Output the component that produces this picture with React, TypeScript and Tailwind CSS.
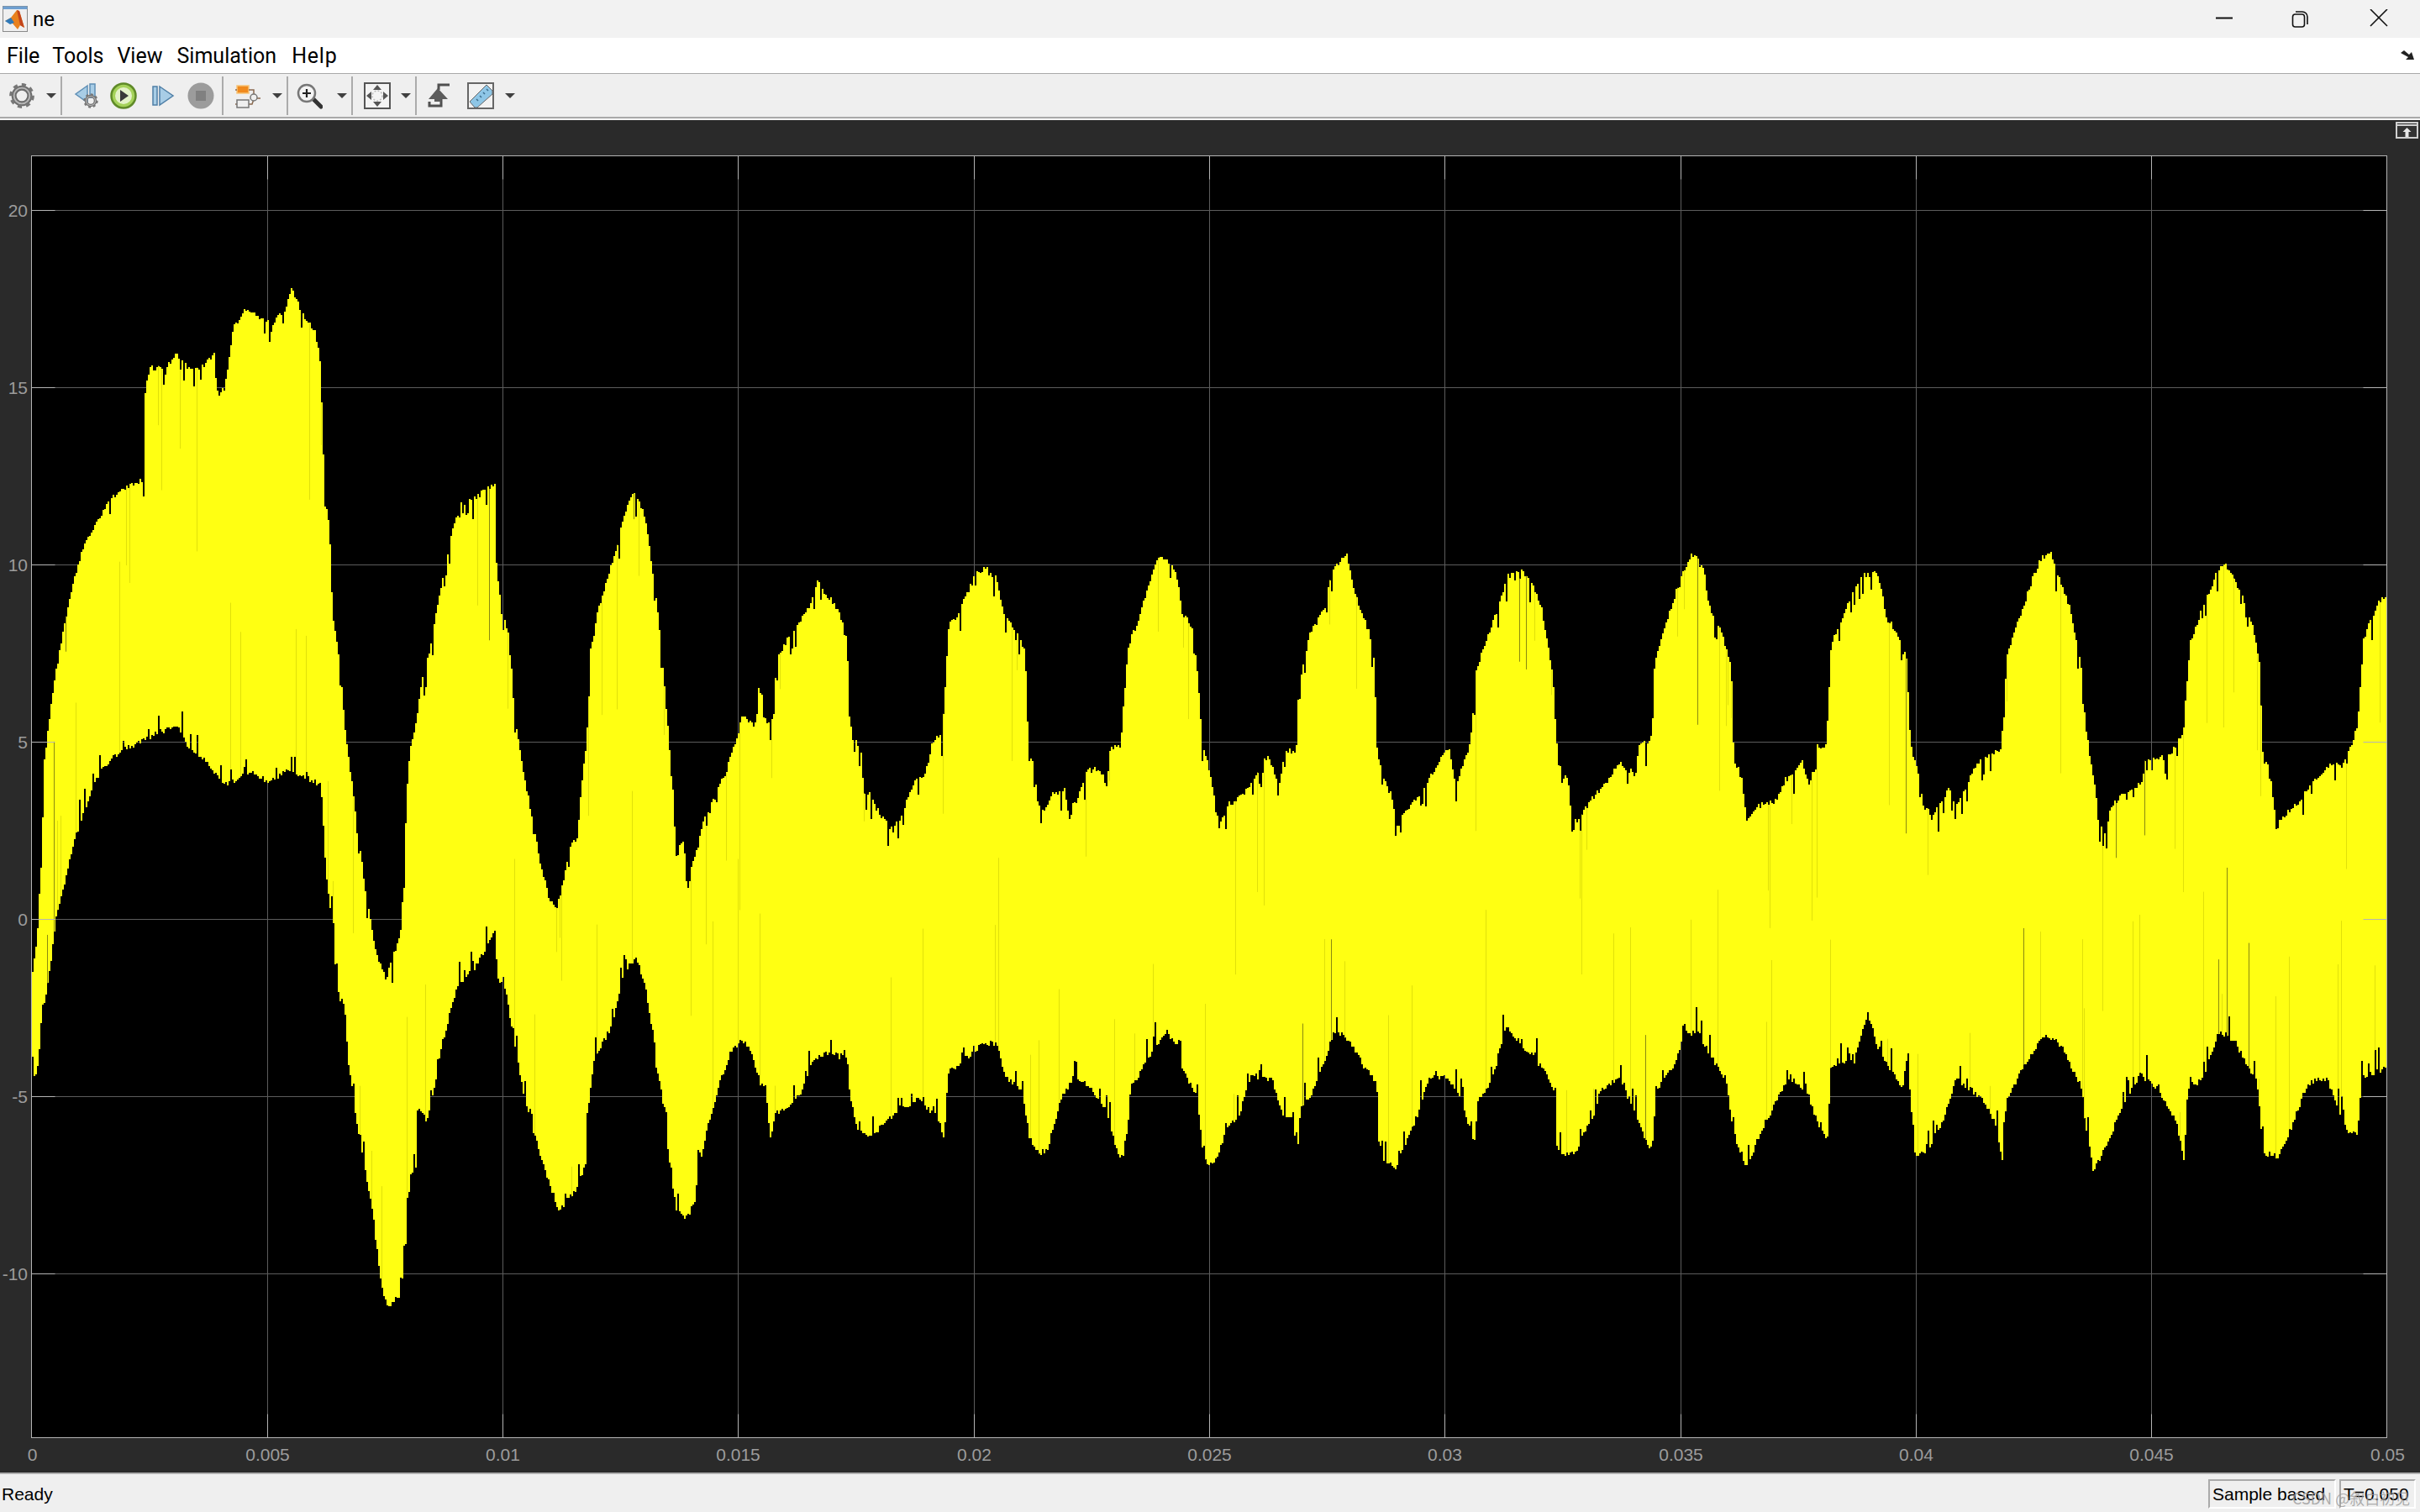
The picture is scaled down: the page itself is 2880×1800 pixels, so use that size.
import { useMemo, type ReactNode } from "react";

type Knot = [number, number];

// envelope traced from the reference, in crop coords: [x0, y0, x scale, y scale, top knots, bottom knots]
const segments: [number, number, number, number, Knot[], Knot[]][] = [
  [30, 320, 2.24, 1.254,
    [[18,1050],[30,1000],[40,880],[48,740],[60,680],[80,600],[100,535],[125,470],[150,420],[180,385],[210,355],[250,328],[300,318],[315,310],[318,180],[330,145],[370,150],[400,125],[435,150],[470,145],[503,125],[508,185],[530,180],[545,115],[555,85],[580,60],[620,70],[660,80],[690,60],[708,25],[735,65],[772,95],[785,140],[790,230],[797,330],[810,390],[815,480],[825,540],[840,605],[850,680],[870,770],[890,860],[905,930],[925,990],[935,1025],[960,1060],[985,1015],[1000,985],[1008,900],[1015,780],[1025,710],[1040,680],[1052,625],[1075,570],[1095,510],[1112,455],[1130,405],[1160,350],[1200,340],[1250,320],[1255,450],[1270,510],[1290,550],[1300,650],[1315,715],[1340,790],[1370,880],[1395,940],[1415,955],[1430,920],[1455,855],[1470,850],[1480,780],[1495,700],[1505,570],[1525,510],[1560,440]],
    [[18,1200],[30,1200],[40,1130],[60,1060],[80,970],[105,910],[130,850],[160,800],[200,745],[250,720],[320,700],[400,680],[440,720],[480,735],[530,770],[600,750],[650,765],[700,745],[785,770],[790,800],[800,900],[815,970],[825,1040],[835,1085],[850,1100],[860,1185],[880,1265],[900,1330],[925,1410],[945,1510],[965,1550],[1000,1530],[1010,1470],[1025,1350],[1040,1335],[1045,1250],[1070,1270],[1095,1205],[1110,1155],[1130,1110],[1150,1070],[1200,1040],[1250,990],[1258,1060],[1280,1075],[1300,1150],[1330,1240],[1370,1320],[1420,1405],[1470,1370],[1492,1335],[1500,1250],[1515,1180],[1560,1130]],
  ],
  [730, 620, 2.24, 1.96,
    [[11,45],[34,-40],[52,-63],[78,-30],[90,30],[100,100],[115,195],[128,320],[135,390],[145,500],[152,590],[160,645],[163,790],[170,750],[187,745],[190,825],[198,855],[210,790],[225,755],[240,690],[270,640],[300,580],[325,510],[340,458],[355,460],[375,480],[382,385],[395,410],[405,465],[425,460],[432,320],[455,285],[490,240],[520,200],[540,140],[575,180],[600,210],[622,280],[626,440],[635,505],[660,535],[665,640],[680,635],[700,670],[735,715],[760,700],[780,650],[800,605],[830,590],[850,510],[875,490],[885,350],[892,245],[920,210],[965,120],[995,108],[1020,135],[1040,220],[1070,250],[1095,305],[1100,400],[1105,545],[1120,570],[1130,660],[1145,680],[1170,635],[1200,625],[1210,670],[1235,650],[1260,580],[1295,578],[1315,620],[1320,535],[1350,520],[1357,440],[1370,290],[1395,235],[1420,165],[1445,90],[1470,85],[1500,125],[1515,215],[1540,245],[1555,350]],
    [[0,1160],[20,1075],[35,1040],[60,1020],[80,1075],[95,1145],[110,1270],[125,1320],[135,1395],[150,1510],[165,1600],[190,1628],[215,1590],[225,1510],[240,1450],[260,1375],[285,1300],[310,1240],[340,1205],[370,1250],[390,1310],[405,1320],[415,1445],[430,1380],[470,1365],[500,1330],[530,1260],[560,1240],[620,1250],[628,1340],[650,1420],[680,1440],[720,1405],[760,1370],[810,1350],[860,1385],[880,1435],[890,1285],[940,1250],[985,1215],[1020,1220],[1040,1290],[1090,1330],[1105,1430],[1130,1475],[1155,1465],[1190,1350],[1225,1295],[1270,1320],[1310,1370],[1345,1480],[1360,1480],[1380,1320],[1430,1240],[1470,1190],[1500,1220],[1520,1290],[1555,1345]],
  ],
  [1430, 620, 2.24, 1.96,
    [[0,510],[25,600],[35,670],[45,710],[70,660],[100,645],[135,605],[175,545],[205,615],[222,530],[250,545],[256,400],[285,265],[320,210],[350,110],[385,75],[410,175],[445,260],[460,340],[465,520],[480,600],[500,620],[518,715],[540,675],[590,625],[630,560],[658,530],[675,620],[715,515],[730,350],[750,295],[790,200],[815,125],[840,110],[875,135],[905,205],[935,360],[942,480],[950,565],[975,600],[985,695],[1000,700],[1035,650],[1085,600],[1110,560],[1155,590],[1165,518],[1195,518],[1205,340],[1225,265],[1260,170],[1290,100],[1305,75],[1335,100],[1350,195],[1385,260],[1410,340],[1417,550],[1440,605],[1450,700],[1480,665],[1530,650],[1560,590]],
    [[0,1465],[15,1505],[40,1485],[65,1415],[100,1380],[130,1295],[185,1300],[215,1385],[240,1385],[253,1490],[262,1365],[290,1340],[320,1270],[350,1195],[370,1195],[400,1225],[430,1270],[465,1310],[470,1440],[485,1490],[515,1505],[545,1445],[575,1380],[605,1300],[650,1295],[690,1350],[725,1450],[735,1345],[770,1310],[810,1175],[845,1215],[880,1245],[925,1300],[940,1340],[945,1450],[960,1480],[1000,1470],[1020,1420],[1050,1370],[1060,1325],[1110,1300],[1145,1360],[1190,1465],[1200,1455],[1215,1320],[1260,1270],[1285,1195],[1320,1190],[1350,1240],[1395,1300],[1415,1420],[1450,1510],[1480,1440],[1530,1350],[1560,1300]],
  ],
  [2130, 620, 2.178, 1.96,
    [[0,590],[30,555],[50,620],[68,515],[90,535],[97,450],[105,285],[140,210],[185,125],[225,120],[250,225],[280,265],[303,325],[310,510],[330,590],[345,665],[370,685],[410,625],[430,665],[480,570],[520,540],[545,535],[562,315],[585,245],[630,125],[650,85],[675,75],[695,130],[725,205],[755,345],[765,480],[785,595],[800,690],[815,730],[830,665],[870,630],[910,610],[920,555],[980,550],[1005,510],[1018,490],[1035,285],[1070,195],[1105,120],[1125,100],[1160,150],[1195,235],[1215,325],[1225,560],[1240,565],[1260,720],[1270,695],[1320,650],[1360,600],[1415,555],[1430,570],[1460,505],[1470,470],[1485,275],[1510,215],[1530,180],[1547,170]],
    [[0,1300],[45,1335],[75,1415],[95,1445],[105,1270],[165,1260],[200,1145],[230,1240],[290,1320],[305,1240],[315,1440],[325,1480],[355,1470],[400,1385],[430,1300],[490,1340],[530,1400],[550,1500],[560,1345],[620,1250],[660,1195],[700,1220],[755,1320],[765,1410],[785,1515],[825,1440],[870,1345],[905,1290],[955,1325],[1000,1400],[1020,1490],[1030,1320],[1070,1300],[1110,1190],[1150,1210],[1210,1310],[1225,1470],[1265,1485],[1300,1410],[1340,1310],[1390,1300],[1445,1425],[1470,1430],[1480,1300],[1547,1270]],
  ],
];

function absKnots(which: 4 | 5): Knot[] {
  return segments.flatMap((s) => (s[which] as Knot[]).map(([px, py]): Knot => [s[0] + px / s[2], s[1] + py / s[3]]));
}

function sample(knots: Knot[], x: number) {
  let i = 0;
  while (i < knots.length - 2 && knots[i + 1][0] < x) i++;
  const [x0, y0] = knots[i];
  const [x1, y1] = knots[i + 1];
  const t = Math.min(1, Math.max(0, (x - x0) / (x1 - x0 || 1)));
  return y0 + (y1 - y0) * t;
}

function rng(seed: number) {
  let s = seed;
  return () => {
    s = (s * 1664525 + 1013904223) % 4294967296;
    return s / 4294967296;
  };
}

// jagged edge: small jitter plus the odd deep notch inwards
function jitter(r: () => number) {
  const base = (r() - 0.5) * 7;
  if (r() < 0.12) return base + 7 + r() * 20;
  return base;
}

function buildWave() {
  const top = absKnots(4);
  const bottom = absKnots(5);
  const r = rng(11);
  const upper: string[] = [];
  const lower: string[] = [];
  const slits: { x: number; y1: number; y2: number; c: string }[] = [];
  for (let x = 38; x < 2840; x += 2) {
    const t = sample(top, x) + jitter(r);
    const b = sample(bottom, x) - jitter(r);
    upper.push(`${x},${t.toFixed(0)} ${x + 2},${t.toFixed(0)}`);
    lower.unshift(`${x + 2},${b.toFixed(0)} ${x},${b.toFixed(0)}`);
    if (r() < 0.11) {
      const fromTop = r() < 0.5;
      const len = 30 + r() * 200;
      const dark = r() < 0.14;
      slits.push({
        x: x + 0.5,
        y1: fromTop ? t : b - len,
        y2: fromTop ? t + len : b,
        c: dark ? "#8a8a10" : "#e0e00a",
      });
    }
  }
  return { points: [...upper, ...lower].join(" "), slits };
}

const xTicks = ["0", "0.005", "0.01", "0.015", "0.02", "0.025", "0.03", "0.035", "0.04", "0.045", "0.05"];
const yTicks: [string, number][] = [["20", 249], ["15", 460], ["10", 671], ["5", 882], ["0", 1093], ["-5", 1304], ["-10", 1515]];
const L = 37.5;
const R = 2840.5;
const T = 184.5;
const B = 1710.5;

function Scope() {
  const wave = useMemo(buildWave, []);
  const xs = xTicks.map((_, i) => Math.round(L + ((R - L) * i) / 10) + 0.5);
  return (
    <svg viewBox="0 142 2880 1610" className="block h-full w-full" fontFamily="'Liberation Sans', Arial, sans-serif">
      <rect x={L} y={T} width={R - L} height={B - T} fill="#000" />
      <g stroke="#5c5c5c" strokeWidth="1">
        {xs.slice(1, -1).map((x) => <line key={x} x1={x} x2={x} y1={T} y2={B} />)}
        {yTicks.map(([l, y]) => <line key={l} x1={L} x2={R} y1={y + 0.5} y2={y + 0.5} />)}
      </g>
      <polygon points={wave.points} fill="#ffff12" />
      {wave.slits.map((s, i) => <line key={i} x1={s.x} x2={s.x} y1={s.y1} y2={s.y2} stroke={s.c} strokeWidth="1" />)}
      <g stroke="#b4b4b4" strokeWidth="1">
        {xs.slice(1, -1).map((x) => (
          <g key={x}>
            <line x1={x} x2={x} y1={T} y2={T + 28} />
            <line x1={x} x2={x} y1={B - 28} y2={B} />
          </g>
        ))}
        {yTicks.map(([l, y]) => (
          <g key={l}>
            <line x1={L} x2={L + 28} y1={y + 0.5} y2={y + 0.5} />
            <line x1={R - 28} x2={R} y1={y + 0.5} y2={y + 0.5} />
          </g>
        ))}
        <rect x={L} y={T} width={R - L} height={B - T} fill="none" />
      </g>
      <g fill="#9c9c9c" fontSize="21">
        {xTicks.map((t, i) => <text key={t} x={xs[i]} y={1738} textAnchor="middle">{t}</text>)}
        {yTicks.map(([l, y]) => <text key={l} x={33} y={y + 8} textAnchor="end">{l}</text>)}
      </g>
      {/* undock button */}
      <rect x="2852" y="145" width="25" height="18" fill="#333" stroke="#d0d0d0" strokeWidth="2" />
      <rect x="2853" y="147" width="23" height="2" fill="#d0d0d0" />
      <path d="M2864.5 151l-5 5h3v6h4v-6h3z" fill="#e8e8e8" />
    </svg>
  );
}

function Matlab() {
  return (
    <svg viewBox="0 0 30 31" className="ml-[3px] h-[31px] w-[30px]">
      <rect x="0.5" y="0.5" width="29" height="30" fill="#efefef" stroke="#8a8a8a" />
      <rect x="0.5" y="0.5" width="29" height="3.5" fill="#6f9fd0" />
      <path d="M3 18l7-4 7-9 3 1 6 20-5-3-3 5-6-7z" fill="#e8811e" />
      <path d="M3 18l7-4 4 6-5 2z" fill="#2f79b8" />
      <path d="M17 5l3 1 6 20-5-3z" fill="#c3451b" />
    </svg>
  );
}

function Icon({ children, ml }: { children: ReactNode; ml: string }) {
  return (
    <svg viewBox="0 0 32 32" className={`h-[32px] w-[32px] shrink-0 ${ml}`}>
      {children}
    </svg>
  );
}

function Caret({ ml }: { ml: string }) {
  return <div className={`h-0 w-0 shrink-0 border-x-[6px] border-t-[6px] border-x-transparent border-t-[#404040] ${ml}`} />;
}

function Sep({ ml }: { ml: string }) {
  return <div className={`h-[46px] w-[2px] shrink-0 bg-[#ababab] ${ml}`} />;
}

function Gear({ cx = 16, cy = 16, r = 11 }: { cx?: number; cy?: number; r?: number }) {
  return (
    <g>
      <circle cx={cx} cy={cy} r={r * 0.78} fill="none" stroke="#6e6e6e" strokeWidth={r * 0.5} />
      <circle cx={cx} cy={cy} r={r * 1.08} fill="none" stroke="#777" strokeWidth={r * 0.32} strokeDasharray={`${r * 0.42} ${r * 0.42}`} />
      <circle cx={cx} cy={cy} r={r * 0.78} fill="none" stroke="#b8b8b8" strokeWidth={r * 0.16} />
    </g>
  );
}

function Toolbar() {
  return (
    <div className="box-content flex h-[51px] items-center border-b-2 border-[#a9a9a9] bg-[#efefef]">
      <Icon ml="ml-[10px]"><Gear r={12} /></Icon>
      <Caret ml="ml-[13px]" />
      <Sep ml="ml-[5px]" />
      <Icon ml="ml-[13px]">
        <path d="M17 4L3 14l14 10z" fill="#a8cde6" stroke="#5f8fb5" strokeWidth="1.5" />
        <rect x="20" y="2" width="6" height="16" fill="#a8cde6" stroke="#5f8fb5" strokeWidth="1.5" />
        <Gear cx={21} cy={22} r={7} />
      </Icon>
      <Icon ml="ml-[12px]">
        <circle cx="16" cy="16" r="14.5" fill="#a5d25a" stroke="#5f8a28" strokeWidth="2.5" />
        <circle cx="16" cy="16" r="10" fill="#e4f2c8" />
        <path d="M12 9l10 7-10 7z" fill="#3a3a3a" />
      </Icon>
      <Icon ml="ml-[14px]">
        <rect x="5" y="5" width="5" height="22" fill="#a8cde6" stroke="#4f7fa6" strokeWidth="1.5" />
        <path d="M13 5l16 11-16 11z" fill="#a8cde6" stroke="#4f7fa6" strokeWidth="1.5" />
      </Icon>
      <Icon ml="ml-[14px]">
        <circle cx="16" cy="16" r="15.5" fill="#9c9c9c" />
        <rect x="10" y="10" width="12" height="12" fill="#808080" />
      </Icon>
      <Sep ml="ml-[9px]" />
      <Icon ml="ml-[13px]">
        <rect x="3" y="4" width="14" height="9" fill="#f08a1e" stroke="#f7c57a" strokeWidth="1.5" />
        <path d="M1 9h2M17 9h6v8M3 26H1M17 26h4l2-6M27 19h4" fill="none" stroke="#8a6a50" strokeWidth="1.5" />
        <rect x="3" y="21" width="14" height="9" fill="#efefef" stroke="#777" strokeWidth="1.5" />
        <circle cx="23" cy="18" r="4" fill="#efefef" stroke="#777" strokeWidth="1.5" />
      </Icon>
      <Caret ml="ml-[13px]" />
      <Sep ml="ml-[5px]" />
      <Icon ml="ml-[9px]">
        <path d="M21 20l9 9" stroke="#333" strokeWidth="5" strokeLinecap="round" />
        <circle cx="13" cy="13" r="10" fill="#f4f4f4" stroke="#777" strokeWidth="2.5" />
        <path d="M13 8v10M8 13h10" stroke="#222" strokeWidth="2.2" />
      </Icon>
      <Caret ml="ml-[17px]" />
      <Sep ml="ml-[5px]" />
      <Icon ml="ml-[13px]">
        <rect x="1" y="1" width="30" height="30" fill="#f4f4f4" stroke="#555" strokeWidth="2" />
        <path d="M16 3l-5 6h10zM16 29l-5-6h10zM3 16l6-5v10zM29 16l-6-5v10z" fill="#555" />
        <circle cx="16" cy="16" r="6" fill="none" stroke="#bbb" strokeWidth="1.5" strokeDasharray="2 2" />
      </Icon>
      <Caret ml="ml-[12px]" />
      <Sep ml="ml-[5px]" />
      <Icon ml="ml-[10px]">
        <path d="M29 3H16v6M19 19v9H5v-5" fill="none" stroke="#505050" strokeWidth="3" />
        <path d="M15 7L4 20h7v3h8v-3h8z" fill="#5c5c5c" />
      </Icon>
      <Icon ml="ml-[18px]">
        <rect x="1" y="1" width="30" height="30" fill="#f2f2f2" stroke="#666" strokeWidth="2" />
        <path d="M3 23L23 3l7 7v4L12 30H9z" fill="#8ec6e6" stroke="#666" strokeWidth="1" />
        <path d="M11 20l2 2M15 16l2 2M19 12l2 2M23 8l2 2" stroke="#3c6e8e" strokeWidth="1.5" />
      </Icon>
      <Caret ml="ml-[13px]" />
    </div>
  );
}

export default function App() {
  return (
    <div className="flex h-[1800px] w-[2880px] flex-col overflow-hidden bg-[#efefef] font-['Liberation_Sans',Arial,sans-serif]">
      <div className="flex h-[45px] shrink-0 items-center bg-[#f2f2f2]">
        <Matlab />
        <span className="ml-[6px] font-['Roboto',sans-serif] text-[24px] leading-none text-black">ne</span>
        <svg viewBox="0 0 230 24" className="ml-auto mr-[19px] h-[24px] w-[230px]" fill="none" stroke="#111" strokeWidth="1.6">
          <path d="M6 10.5h20" strokeWidth="2" />
          <rect x="97.500" y="6" width="14" height="15" rx="3" />
          <path d="M101 3h8a6 6 0 0 1 6 6v9" />
          <path d="M190 0l20 20M210 0l-20 20" />
        </svg>
      </div>
      <div className="flex h-[42px] shrink-0 items-center bg-white pl-[8px] font-['Roboto',sans-serif] text-[25px] leading-none text-black">
        <span>File</span>
        <span className="ml-[15px]">Tools</span>
        <span className="ml-[16px]">View</span>
        <span className="ml-[17px]">Simulation</span>
        <span className="ml-[18px] tracking-[0.8px]">Help</span>
        <svg viewBox="0 0 16 12" className="ml-auto mr-[7px] h-[12px] w-[16px]">
          <path d="M0 3l4-3 6 5 3-3 3 9H6l3-3z" fill="#222" />
        </svg>
      </div>
      <div className="h-px shrink-0 bg-[#a9a9a9]" />
      <Toolbar />
      <div className="h-[2px] shrink-0 bg-[#f4f4f4]" />
      <div className="h-[1610px] shrink-0 bg-[#2a2a2a]">
        <Scope />
      </div>
      <div className="h-[3px] shrink-0 border-b border-[#f4f4f4] bg-[#b0b0b0]" />
      <div className="relative flex flex-1 items-center text-[21px] leading-none text-black">
        <span className="ml-[2px]">Ready</span>
        <div className="ml-auto mr-[4px] flex h-[35px] w-[152px] items-center border-2 border-[#aaa] border-b-white border-r-white pl-[3px]">Sample based</div>
        <div className="mr-[5px] flex h-[35px] w-[91px] items-center border-2 border-[#aaa] border-b-white border-r-white pl-[3px]">T=0.050</div>
        <span className="absolute left-[2728px] top-[18px] whitespace-nowrap font-['Noto_Sans_CJK_SC',sans-serif] text-[18px] text-[#9a9a9a]/80">CSDN @叙白初见</span>
      </div>
    </div>
  );
}
